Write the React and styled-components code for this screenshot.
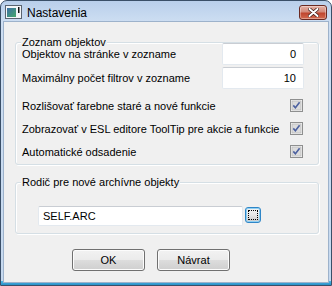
import React from "react";
import styled, { createGlobalStyle } from "styled-components";

const Global = createGlobalStyle`
  html, body { margin: 0; padding: 0; background: #fff; }
  body { font-family: "Liberation Sans", Arial, sans-serif; font-size: 11px; color: #000; }
`;

const Window = styled.div`
  width: 332px;
  height: 286px;
  box-sizing: border-box;
  border: 1px solid #3a4f68;
  border-radius: 7px 7px 0 0;
  background: linear-gradient(
    to bottom,
    #b9cfeb 0,
    #cddef2 21px,
    #c6d9ef calc(100% - 4px),
    #4cbbe8 calc(100% - 4px),
    #2a8fc7 100%
  );
  display: flex;
  flex-direction: column;
  overflow: hidden;
`;

const TitleBar = styled.div`
  height: 21px;
  display: flex;
  align-items: flex-start;
  padding: 0 4px 0 4px;
  flex: none;
`;

const TitleIcon = styled.svg`
  margin-top: 4px;
  flex: none;
`;

const TitleText = styled.div`
  font-size: 12px;
  line-height: 14px;
  margin: 5px 0 0 5px;
`;

const CloseButton = styled.div`
  margin: 4px 0 0 auto;
  width: 28px;
  height: 15px;
  box-sizing: border-box;
  border: 1px solid #6b2a22;
  border-radius: 3px;
  background: linear-gradient(to bottom, #e6b1a6 0, #d38a7a 45%, #c0462f 55%, #d26a4f 100%);
  display: flex;
  align-items: center;
  justify-content: center;
  box-shadow: inset 0 0 0 1px rgba(255, 255, 255, 0.35);
`;

const Client = styled.div`
  margin: 0 3px;
  height: 260px;
  background: #f0f0f0;
  box-shadow: 0 0 0 1px #9db2cb;
  display: flex;
  flex-direction: column;
  padding: 20px 9px 0 11px;
  box-sizing: border-box;
`;

const Group = styled.div`
  position: relative;
  border: 1px solid #d5dfe5;
  border-radius: 3px;
  box-shadow: inset 1px 1px 0 #fff, 1px 1px 0 #fff;
  padding: ${(p) => p.$pad};
  margin-top: ${(p) => p.$top || 0}px;
`;

const Legend = styled.div`
  position: absolute;
  top: -7px;
  left: 5px;
  padding: 0 1px;
  line-height: 13px;
  background: #f0f0f0;
`;

const Row = styled.div`
  display: flex;
  align-items: center;
  height: ${(p) => p.$h}px;
  margin-top: ${(p) => p.$top || 0}px;
`;

const Label = styled.div`
  flex: 1;
  white-space: nowrap;
`;

const TextBox = styled.div`
  width: ${(p) => p.$w}px;
  height: ${(p) => p.$h}px;
  box-sizing: border-box;
  background: #fff;
  border: 1px solid #e3e9ef;
  border-top-color: #c9cdd3;
  border-radius: 2px;
  display: flex;
  align-items: center;
  justify-content: ${(p) => (p.$right ? "flex-end" : "flex-start")};
  padding: 0 ${(p) => (p.$right ? 7 : 4)}px;
`;

const Check = styled.svg`
  margin-right: 1px;
  flex: none;
`;

const Browse = styled.div`
  width: 16px;
  height: 16px;
  margin: 1px 0 0 2px;
  align-self: flex-start;
  box-sizing: border-box;
  border: 1px solid #2f86c7;
  border-radius: 3px;
  background: linear-gradient(to bottom, #f4f4f4 0, #e6e6e6 50%, #c8c8c8 100%);
  box-shadow: inset 0 0 0 1px #8fd0f4;
  padding: 2px;
`;

const Focus = styled.div`
  width: 100%;
  height: 100%;
  box-sizing: border-box;
  border: 1px dotted #000;
`;

const Buttons = styled.div`
  display: flex;
  gap: 12px;
  margin: 15px 0 0 57px;
`;

const Button = styled.div`
  width: 73px;
  height: 22px;
  box-sizing: border-box;
  border: 1px solid #707070;
  border-radius: 3px;
  background: linear-gradient(to bottom, #f2f2f2 0, #ebebeb 50%, #dddddd 50%, #cfcfcf 100%);
  box-shadow: inset 0 0 0 1px #fcfcfc;
  display: flex;
  align-items: center;
  justify-content: center;
`;

const CheckBox = () => (
  <Check width="13" height="13" viewBox="0 0 13 13">
    <rect x="0.5" y="0.5" width="12" height="12" fill="#f4f4f4" stroke="#8e8f8f" />
    <rect x="2" y="2" width="9" height="9" fill="#dcdcdc" stroke="#b1b1b1" strokeWidth="0.6" />
    <path d="M3.3 6.4 L5.4 8.8 L9.6 3.3" fill="none" stroke="#4c61a0" strokeWidth="1.6" />
  </Check>
);

const checks = [
  "Rozlišovať farebne staré a nové funkcie",
  "Zobrazovať v ESL editore ToolTip pre akcie a funkcie",
  "Automatické odsadenie",
];

export default function App() {
  return (
    <>
      <Global />
      <Window>
        <TitleBar>
          <TitleIcon width="17" height="14" viewBox="0 0 17 14">
            <defs>
              <linearGradient id="ic" x1="0" y1="0" x2="1" y2="1">
                <stop offset="0" stopColor="#3d6fa6" />
                <stop offset="1" stopColor="#45a86a" />
              </linearGradient>
            </defs>
            <rect x="0.5" y="0.5" width="16" height="13" fill="#f4f6f8" stroke="#5a6470" />
            <rect x="2" y="3" width="9" height="9" fill="url(#ic)" />
            <rect x="13" y="2" width="1.5" height="6" fill="#111" />
          </TitleIcon>
          <TitleText>Nastavenia</TitleText>
          <CloseButton>
            <svg width="11" height="9" viewBox="0 0 11 9">
              <path
                d="M1.5 1 L9.5 8 M9.5 1 L1.5 8"
                stroke="#3a1a16"
                strokeWidth="3.4"
                strokeLinecap="round"
              />
              <path d="M1.5 1 L9.5 8 M9.5 1 L1.5 8" stroke="#fff" strokeWidth="2" strokeLinecap="round" />
            </svg>
          </CloseButton>
        </TitleBar>
        <Client>
          <Group $pad="0 14px 1px 6px">
            <Legend>Zoznam objektov</Legend>
            <Row $h={22}>
              <Label>Objektov na stránke v zozname</Label>
              <TextBox $w={82} $h={22} $right>0</TextBox>
            </Row>
            <Row $h={22} $top={2}>
              <Label>Maximálny počet filtrov v zozname</Label>
              <TextBox $w={82} $h={22} $right>10</TextBox>
            </Row>
            {checks.map((c, i) => (
              <Row key={c} $h={23} $top={i === 0 ? 5 : 0}>
                <Label>{c}</Label>
                <CheckBox />
              </Row>
            ))}
          </Group>
          <Group $top={17} $pad="23px 14px 7px 22px">
            <Legend>Rodič pre nové archívne objekty</Legend>
            <Row $h={20}>
              <TextBox $w={205} $h={20}>SELF.ARC</TextBox>
              <Browse>
                <Focus />
              </Browse>
            </Row>
          </Group>
          <Buttons>
            <Button>OK</Button>
            <Button>Návrat</Button>
          </Buttons>
        </Client>
      </Window>
    </>
  );
}
